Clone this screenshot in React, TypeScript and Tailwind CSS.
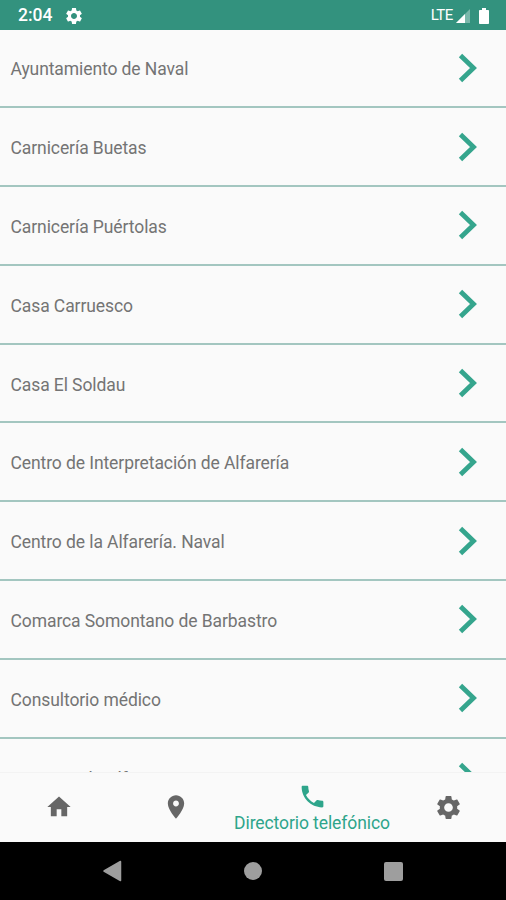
import React from 'react';

const entries = [
  'Ayuntamiento de Naval',
  'Carnicería Buetas',
  'Carnicería Puértolas',
  'Casa Carruesco',
  'Casa El Soldau',
  'Centro de Interpretación de Alfarería',
  'Centro de la Alfarería. Naval',
  'Comarca Somontano de Barbastro',
  'Consultorio médico',
  'Empresa de Alfa',
];

const gearPath =
  'M19.14 12.94c.04-.3.06-.61.06-.94 0-.32-.02-.64-.07-.94l2.03-1.58c.18-.14.23-.41.12-.61l-1.92-3.32c-.12-.22-.37-.29-.59-.22l-2.39.96c-.5-.38-1.03-.7-1.62-.94l-.36-2.54c-.04-.24-.24-.41-.48-.41h-3.84c-.24 0-.43.17-.47.41l-.36 2.54c-.59.24-1.13.57-1.62.94l-2.39-.96c-.22-.08-.47 0-.59.22L2.74 8.87c-.12.21-.08.47.12.61l2.03 1.58c-.05.3-.09.63-.09.94s.02.64.07.94l-2.03 1.58c-.18.14-.23.41-.12.61l1.92 3.32c.12.22.37.29.59.22l2.39-.96c.5.38 1.03.7 1.62.94l.36 2.54c.05.24.24.41.48.41h3.84c.24 0 .44-.17.47-.41l.36-2.54c.59-.24 1.13-.56 1.62-.94l2.39.96c.22.08.47 0 .59-.22l1.92-3.32c.12-.22.07-.47-.12-.61l-2.01-1.58zM12 15.6c-1.98 0-3.6-1.62-3.6-3.6s1.62-3.6 3.6-3.6 3.6 1.62 3.6 3.6-1.62 3.6-3.6 3.6z';

const Icon: React.FC<{ d: string; className: string }> = ({ d, className }) => (
  <svg viewBox="0 0 24 24" fill="currentColor" className={className}>
    <path d={d} />
  </svg>
);

const StatusBar: React.FC = () => (
  <header className="flex h-[29.5px] shrink-0 items-center bg-[#33927e] pl-[18px] pr-[16px] pt-[2px] text-white">
    <span className="text-[17.5px] font-medium leading-none">2:04</span>
    <Icon d={gearPath} className="ml-[12px] size-[20px]" />
    <span className="ml-auto text-[15px] leading-none tracking-[-0.4px]">LTE</span>
    <svg viewBox="0 0 16 16" className="ml-[2px] size-[16px]">
      <path d="M15 1v14H1z" fill="#fff" fillOpacity="0.35" />
      <path d="M10 6v9H1z" fill="#fff" />
    </svg>
    <svg viewBox="0 0 12 18" className="ml-[7px] h-[18px] w-[12px]">
      <path d="M4 1h4v2h2.2c.5 0 .8.3.8.8v12.4c0 .5-.3.8-.8.8H1.8c-.5 0-.8-.3-.8-.8V3.8c0-.5.3-.8.8-.8H4z" fill="#fff" />
    </svg>
  </header>
);

const Row: React.FC<{ name: string }> = ({ name }) => (
  <li className="flex h-[78.8px] shrink-0 items-center justify-between border-b-2 border-[#a3c6c0] pl-[10.5px] pr-[28px]">
    <span className="pt-[3px] text-[17.5px] leading-6 tracking-[-0.09px]">{name}</span>
    <svg viewBox="0 0 20 30" className="h-[30px] w-[20px] text-[#35a58d]">
      <path d="M2.5 2.5L15.5 15L2.5 27.5" fill="none" stroke="currentColor" strokeWidth="4.8" />
    </svg>
  </li>
);

const TabBar: React.FC = () => (
  <nav className="flex h-[70px] shrink-0 border-t border-[#f3f3f3] bg-[#fafafa] text-[#666]">
    <div className="flex w-[117px] items-center justify-center pb-[2px]">
      <Icon d="M10 20v-6h4v6h5v-8h3L12 3 2 12h3v8z" className="size-[28px]" />
    </div>
    <div className="flex w-[117px] items-center justify-center pb-[2px]">
      <Icon
        d="M12 2C8.13 2 5 5.13 5 9c0 5.25 7 13 7 13s7-7.75 7-13c0-3.87-3.13-7-7-7zm0 9.5c-1.38 0-2.5-1.12-2.5-2.5s1.12-2.5 2.5-2.5 2.5 1.12 2.5 2.5-1.12 2.5-2.5 2.5z"
        className="size-[28px]"
      />
    </div>
    <div className="flex w-[156px] flex-col items-center pt-[9px] text-[#2ea58b]">
      <Icon
        d="M6.62 10.79c1.44 2.83 3.76 5.14 6.59 6.59l2.2-2.2c.27-.27.67-.36 1.02-.24 1.12.37 2.33.57 3.57.57.55 0 1 .45 1 1V20c0 .55-.45 1-1 1-9.39 0-17-7.61-17-17 0-.55.45-1 1-1h3.5c.55 0 1 .45 1 1 0 1.25.2 2.45.57 3.57.11.35.03.74-.25 1.02l-2.2 2.2z"
        className="size-[29px]"
      />
      <span className="whitespace-nowrap text-[17.5px] leading-6 tracking-[-0.09px]">Directorio telefónico</span>
    </div>
    <div className="flex w-[116px] items-center justify-center pb-[1px]">
      <Icon d={gearPath} className="size-[29px]" />
    </div>
  </nav>
);

const SystemBar: React.FC = () => (
  <footer className="flex h-[58px] shrink-0 items-center justify-between bg-black pl-[102px] pr-[103px] text-[#9e9e9e]">
    <svg viewBox="0 0 20 22" className="h-[22px] w-[20px]">
      <path d="M18.5 1.5v19L2 11z" fill="currentColor" stroke="currentColor" strokeWidth="1.5" strokeLinejoin="round" />
    </svg>
    <div className="size-[18px] rounded-full bg-[#9e9e9e]" />
    <div className="size-[19px] rounded-[2px] bg-[#9e9e9e]" />
  </footer>
);

const App: React.FC = () => (
  <div className="flex h-[900px] w-[506px] flex-col overflow-hidden bg-[#fafafa] font-['Roboto',sans-serif] text-[#747474]">
    <StatusBar />
    <ul className="flex min-h-0 flex-1 flex-col overflow-hidden">
      {entries.map((name) => (
        <Row key={name} name={name} />
      ))}
    </ul>
    <TabBar />
    <SystemBar />
  </div>
);

export default App;
